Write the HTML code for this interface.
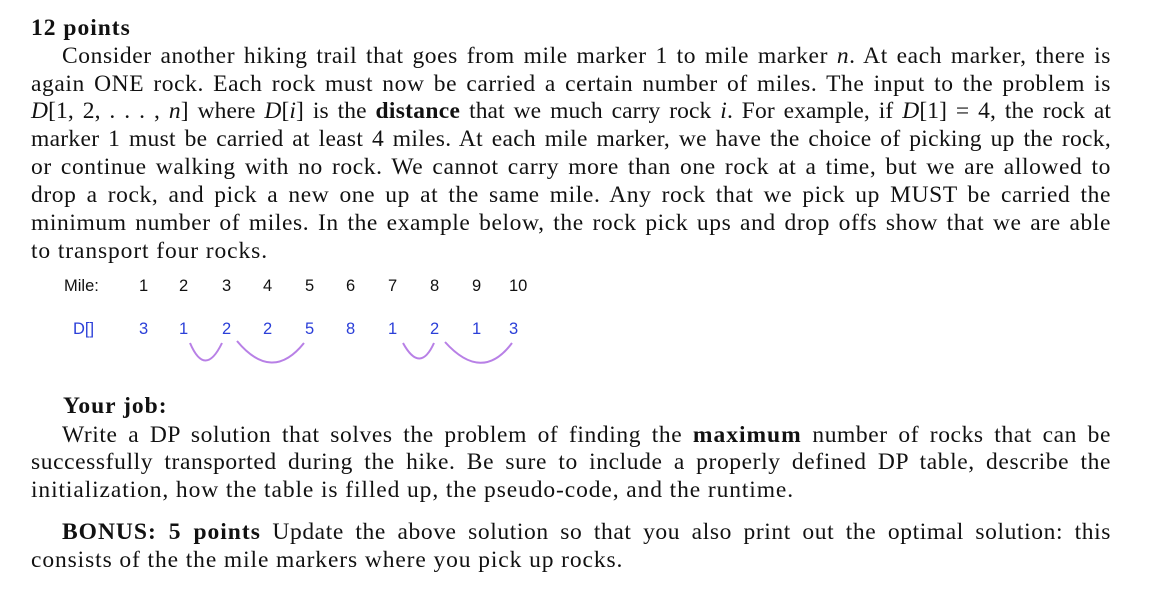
<!DOCTYPE html>
<html><head><meta charset="utf-8"><style>
body{margin:0;width:1151px;height:599px;background:#fff;position:relative;overflow:hidden;font-family:"Liberation Serif",serif;color:#111}
.l{position:absolute;left:31px;width:1080px;font-size:23.5px;letter-spacing:0.9px;line-height:28px;text-align:justify;text-align-last:justify;white-space:nowrap}
.n{text-align-last:left}
b{font-weight:bold;letter-spacing:1px}
i{font-style:italic}
.s{position:absolute;font-family:"Liberation Sans",sans-serif;font-size:16.5px;line-height:20px}
.bl{color:#2b3fd8}
</style></head><body>
<div class="l n" style="top:14px"><b>12 points</b></div>
<div class="l" style="top:42px;padding-left:31px;width:1049px;letter-spacing:0.6px">Consider another hiking trail that goes from mile marker 1 to mile marker <i>n</i>. At each marker, there is</div>
<div class="l" style="top:70px;letter-spacing:0.6px">again ONE rock. Each rock must now be carried a certain number of miles. The input to the problem is</div>
<div class="l" style="top:97px;letter-spacing:0.1px"><i>D</i>[1,&nbsp;2,&nbsp;.&nbsp;.&nbsp;.&nbsp;,&nbsp;<i>n</i>] where <i>D</i>[<i>i</i>] is the <b style="letter-spacing:0.3px">distance</b> that we much carry rock <i>i</i>. For example, if <i>D</i>[1]&nbsp;=&nbsp;4, the rock at</div>
<div class="l" style="top:125px;letter-spacing:0.3px">marker 1 must be carried at least 4 miles. At each mile marker, we have the choice of picking up the rock,</div>
<div class="l" style="top:153px;letter-spacing:0.6px">or continue walking with no rock. We cannot carry more than one rock at a time, but we are allowed to</div>
<div class="l" style="top:181px;letter-spacing:0.6px">drop a rock, and pick a new one up at the same mile. Any rock that we pick up MUST be carried the</div>
<div class="l" style="top:209px;letter-spacing:0.6px">minimum number of miles. In the example below, the rock pick ups and drop offs show that we are able</div>
<div class="l n" style="top:237px">to transport four rocks.</div>

<div class="s" style="left:64px;top:276px">Mile:</div>
<div class="s" style="left:139px;top:276px">1</div><div class="s" style="left:179px;top:276px">2</div><div class="s" style="left:222px;top:276px">3</div><div class="s" style="left:263px;top:276px">4</div><div class="s" style="left:305px;top:276px">5</div><div class="s" style="left:346px;top:276px">6</div><div class="s" style="left:388px;top:276px">7</div><div class="s" style="left:430px;top:276px">8</div><div class="s" style="left:472px;top:276px">9</div><div class="s" style="left:509px;top:276px">10</div>
<div class="s bl" style="left:73px;top:319px">D[]</div>
<div class="s bl" style="left:139px;top:319px">3</div><div class="s bl" style="left:179px;top:319px">1</div><div class="s bl" style="left:222px;top:319px">2</div><div class="s bl" style="left:263px;top:319px">2</div><div class="s bl" style="left:305px;top:319px">5</div><div class="s bl" style="left:346px;top:319px">8</div><div class="s bl" style="left:388px;top:319px">1</div><div class="s bl" style="left:430px;top:319px">2</div><div class="s bl" style="left:472px;top:319px">1</div><div class="s bl" style="left:509px;top:319px">3</div>
<svg style="position:absolute;left:0;top:0" width="1151" height="599"><g fill="none" stroke="#b880e6" stroke-width="2">
<path d="M190 343 Q205 378 222 343"/><path d="M237 341 Q272 383 304 343"/><path d="M403 343 Q420 374 434 343"/><path d="M445 342 Q482 383 512 343"/></g></svg>

<div class="l n" style="top:392px;left:63px"><b>Your job:</b></div>
<div class="l" style="top:421px;padding-left:31px;width:1049px;letter-spacing:0.6px">Write a DP solution that solves the problem of finding the <b>maximum</b> number of rocks that can be</div>
<div class="l" style="top:448px;letter-spacing:0.6px">successfully transported during the hike. Be sure to include a properly defined DP table, describe the</div>
<div class="l n" style="top:476px">initialization, how the table is filled up, the pseudo-code, and the runtime.</div>
<div class="l" style="top:518px;padding-left:31px;width:1049px;letter-spacing:0.6px"><b>BONUS: 5 points</b> Update the above solution so that you also print out the optimal solution: this</div>
<div class="l n" style="top:546px">consists of the the mile markers where you pick up rocks.</div>
</body></html>
